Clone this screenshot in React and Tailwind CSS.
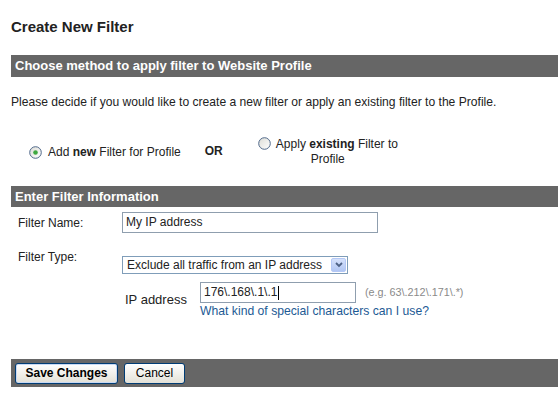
import React from "react";

const font = { fontFamily: '"Liberation Sans", Arial, sans-serif' };

function Radio({ checked }) {
  return (
    <svg width="13" height="13" viewBox="0 0 13 13" className="inline-block align-[-2px]">
      <defs>
        <linearGradient id={checked ? "rg1" : "rg2"} x1="0" y1="0" x2="1" y2="1">
          <stop offset="0" stopColor="#dcdcd6" />
          <stop offset="1" stopColor="#ffffff" />
        </linearGradient>
      </defs>
      <circle cx="6.5" cy="6.5" r="5.8" fill={`url(#${checked ? "rg1" : "rg2"})`} stroke="#50698a" strokeWidth="1" />
      {checked && <circle cx="6.5" cy="6.5" r="2.3" fill="#3fa83f" />}
    </svg>
  );
}

function Bar({ children, className = "" }) {
  return (
    <div className={`bg-[#666666] text-white font-bold text-[13px] pl-[4px] ${className}`}>{children}</div>
  );
}

export default function App() {
  return (
    <div className="w-[558px] h-[401px] bg-white overflow-hidden pl-[11px] text-[#222]" style={font}>
      <h1 className="pt-[18px] text-[15px] font-bold text-[#222] leading-[18px]">Create New Filter</h1>

      <Bar className="mt-[19px] h-[22px] leading-[22px]">Choose method to apply filter to Website Profile</Bar>

      <p className="mt-[18px] text-[12.1px] leading-[15px]">
        Please decide if you would like to create a new filter or apply an existing filter to the Profile.
      </p>

      <div className="flex items-start mt-[27px] text-[12px] leading-[15px] h-[42px]">
        <label className="ml-[18px] mt-[8px] flex items-center gap-[6px]">
          <Radio checked />
          <span>Add <b>new</b> Filter for Profile</span>
        </label>
        <span className="ml-[24px] mt-[7px] font-bold">OR</span>
        <label className="ml-[34px] w-[142px] text-center">
          <Radio /> <span className="ml-[2px]">Apply <b>existing</b> Filter to Profile</span>
        </label>
      </div>

      <Bar className="mt-[7px] h-[21px] leading-[21px]">Enter Filter Information</Bar>

      <div className="text-[12px]">
        <div className="flex items-center mt-[5px]">
          <span className="w-[111px] pl-[7px]">Filter Name:</span>
          <div className="w-[256px] h-[21px] border border-[#8f9eae] px-[3px] leading-[19px] text-[12px]">My IP address</div>
        </div>

        <div className="flex items-start mt-[17px]">
          <span className="w-[111px] pl-[7px] leading-[15px]">Filter Type:</span>
          <div className="mt-[6px] w-[226px] h-[18px] border border-[#7f9db9] flex items-center pl-[4px] pr-[1px]">
            <span className="flex-1 leading-[16px]">Exclude all traffic from an IP address</span>
            <span className="w-[15px] h-[14px] rounded-[2px] bg-gradient-to-b from-[#d5e1fb] to-[#b1c6f3] border border-[#b4c8f6] flex items-center justify-center">
              <svg width="8" height="6" viewBox="0 0 8 6">
                <path d="M1 1 L4 4 L7 1" fill="none" stroke="#4d6185" strokeWidth="1.8" />
              </svg>
            </span>
          </div>
        </div>

        <div className="flex items-start mt-[8px]">
          <span className="ml-[114px] w-[75px] mt-[10px] leading-[15px] text-[13px]">IP address</span>
          <div>
            <div className="flex items-center">
              <div className="w-[156px] h-[21px] border border-[#8f9eae] px-[3px] leading-[19px] text-[12px] flex items-center">
                176\.168\.1\.1<span className="inline-block w-px h-[14px] bg-black ml-[1px]" />
              </div>
              <span className="ml-[9px] text-[10.8px] text-[#8a8a8a]">(e.g. 63\.212\.171\.*)</span>
            </div>
            <a className="block text-[12.2px] leading-[15px] text-[#1c5a94] mt-[1px]">What kind of special characters can I use?</a>
          </div>
        </div>
      </div>

      <div className="mt-[40px] h-[28px] bg-[#666666] flex items-center pl-[4px] gap-[6px]">
        <button className="h-[21px] w-[103px] rounded-[3px] border border-[#003c74] bg-gradient-to-b from-[#ffffff] to-[#e3e1d7] text-[12px] font-bold text-black shadow-[inset_0_0_0_1px_#c9d9f3]">
          Save Changes
        </button>
        <button className="h-[21px] w-[61px] rounded-[3px] border border-[#003c74] bg-gradient-to-b from-[#ffffff] to-[#e3e1d7] text-[12px] text-black">
          Cancel
        </button>
      </div>
    </div>
  );
}
